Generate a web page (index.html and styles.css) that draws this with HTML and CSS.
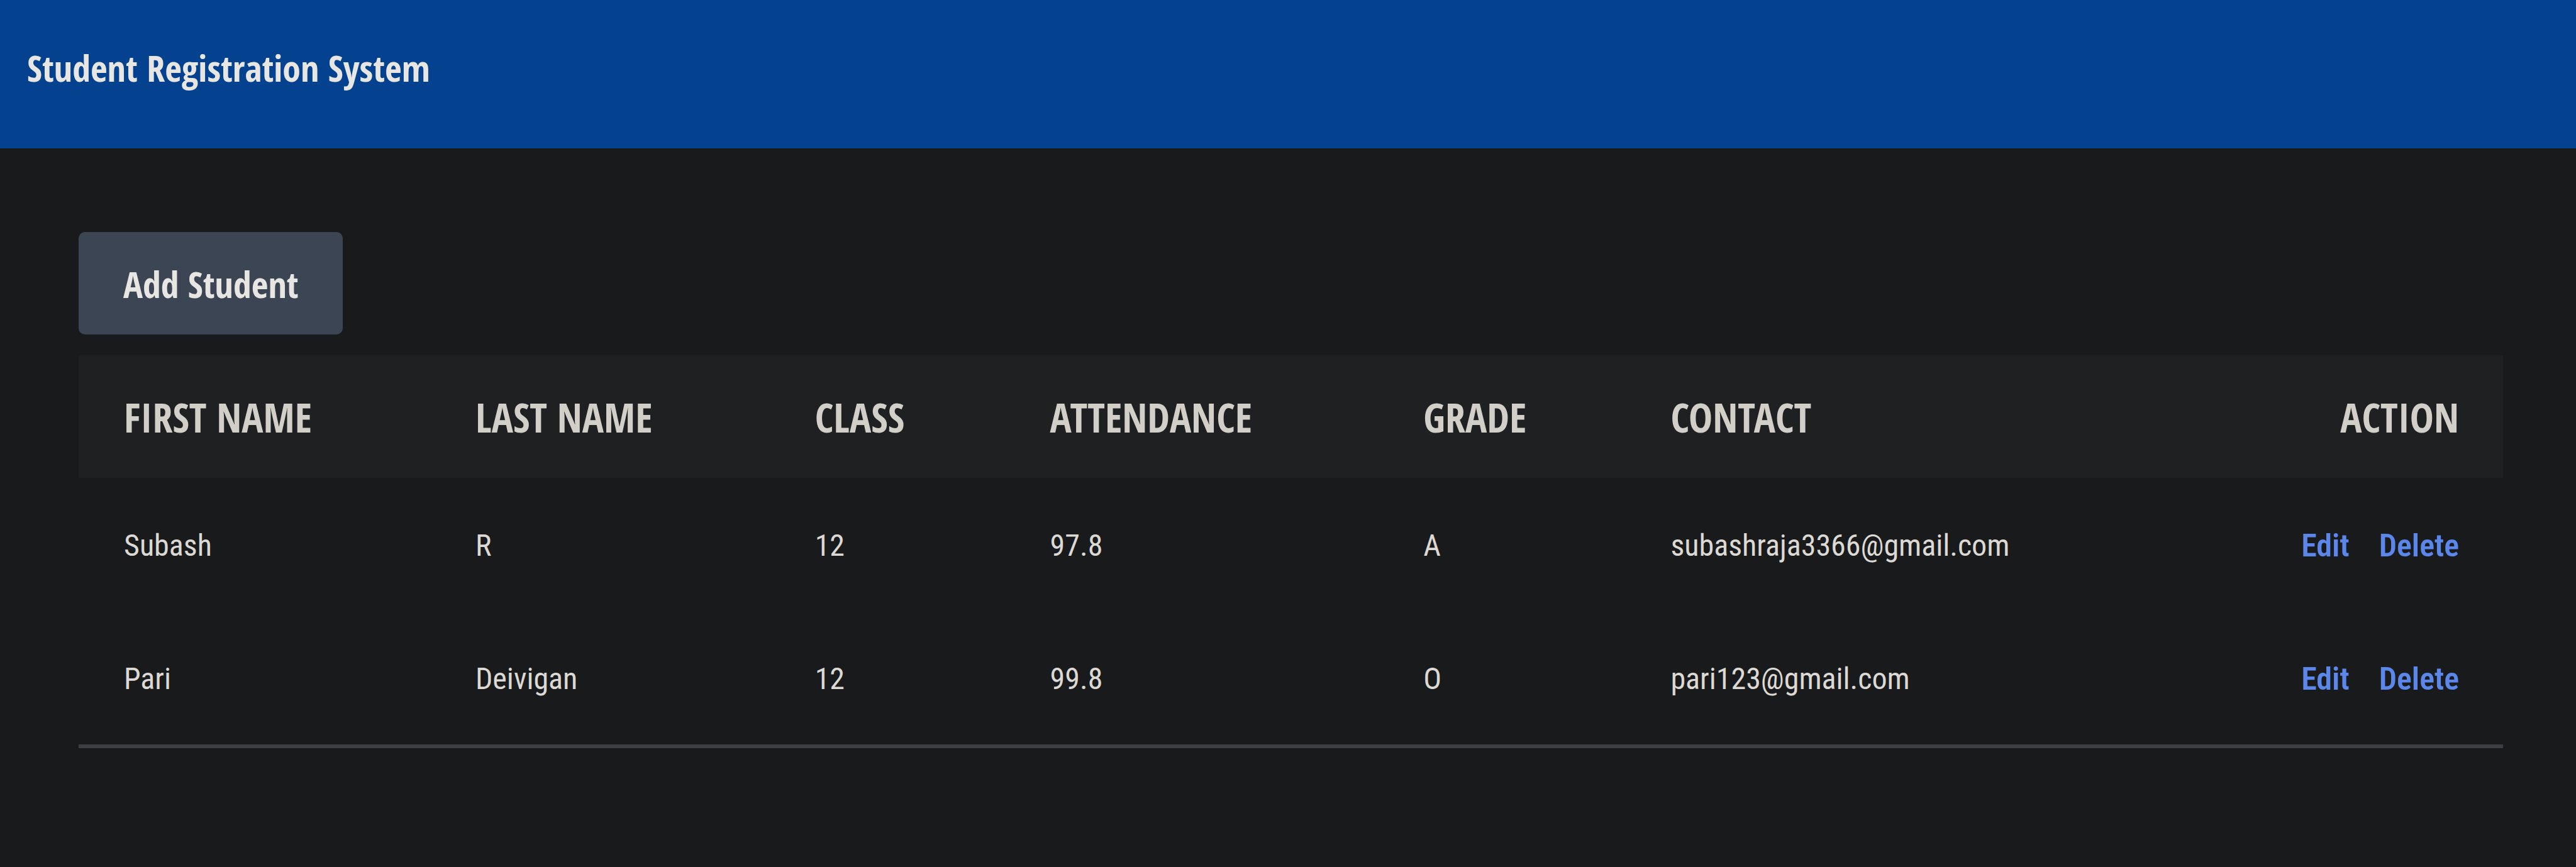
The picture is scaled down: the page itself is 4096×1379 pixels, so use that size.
FILE: index.html
```html
<!DOCTYPE html>
<html lang="en">
<head>
  <meta charset="utf-8">
  <meta name="viewport" content="width=device-width, initial-scale=1">
  <title>Student Registration System</title>
  <link rel="stylesheet" href="styles.css">
</head>
<body>
  <header class="topbar">
    <h1 class="topbar-title">Student Registration System</h1>
  </header>
  <main class="content">
    <button type="button" class="add-button">Add Student</button>
    <table class="students">
      <colgroup>
        <col class="col-first">
        <col class="col-last">
        <col class="col-class">
        <col class="col-attendance">
        <col class="col-grade">
        <col class="col-contact">
        <col class="col-action">
      </colgroup>
      <thead>
        <tr>
          <th scope="col">FIRST NAME</th>
          <th scope="col">LAST NAME</th>
          <th scope="col">CLASS</th>
          <th scope="col">ATTENDANCE</th>
          <th scope="col">GRADE</th>
          <th scope="col">CONTACT</th>
          <th scope="col" class="action">ACTION</th>
        </tr>
      </thead>
      <tbody>
        <tr>
          <td>Subash</td>
          <td>R</td>
          <td>12</td>
          <td>97.8</td>
          <td>A</td>
          <td>subashraja3366@gmail.com</td>
          <td class="action"><div class="links"><a href="#edit-1">Edit</a><a href="#delete-1">Delete</a></div></td>
        </tr>
        <tr>
          <td>Pari</td>
          <td>Deivigan</td>
          <td>12</td>
          <td>99.8</td>
          <td>O</td>
          <td>pari123@gmail.com</td>
          <td class="action"><div class="links"><a href="#edit-2">Edit</a><a href="#delete-2">Delete</a></div></td>
        </tr>
      </tbody>
    </table>
  </main>
</body>
</html>
```
FILE: styles.css
```css
* {
  box-sizing: border-box;
}

body {
  margin: 0;
  background: #191a1c;
  color: #dcd9d4;
  font-family: "Roboto Condensed", "Open Sans", sans-serif;
  font-size: 48px;
  line-height: 80px;
}

.topbar {
  padding: 68px 43px 88px;
  background: #04418f;
}

.topbar-title {
  margin: 0;
  color: #e8e6e3;
  font-family: "Open Sans Condensed", "Open Sans", sans-serif;
  font-size: 58px;
  font-weight: 700;
  line-height: 80px;
}

.content {
  display: flex;
  flex-direction: column;
  align-items: flex-start;
  gap: 33px;
  padding: 133px 116px 132px 125px;
}

.add-button {
  padding: 43px 70px 40px 71px;
  border: 0;
  border-radius: 10px;
  background: #3b4554;
  color: #e8e6e3;
  font-family: "Open Sans Condensed", "Open Sans", sans-serif;
  font-size: 58px;
  font-weight: 700;
  line-height: 80px;
}

.students {
  width: 100%;
  table-layout: fixed;
  border-collapse: separate;
  border-spacing: 0;
  border-bottom: 6px solid #3c3e41;
}

.col-first {
  width: 14.5%;
}

.col-last {
  width: 14%;
}

.col-class {
  width: 9.7%;
}

.col-attendance {
  width: 15.4%;
}

.col-grade {
  width: 10.2%;
}

.col-contact {
  width: 22%;
}

.students th,
.students td {
  padding: 68px 70px 64px 72px;
  text-align: left;
  white-space: nowrap;
}

.students th {
  padding: 59px 70px 56px 72px;
  background: #1e2022;
  color: #d2cec8;
  font-family: "Open Sans Condensed", "Open Sans", sans-serif;
  font-size: 64px;
  font-weight: 700;
}

.students .action {
  text-align: right;
}

.links {
  display: flex;
  justify-content: flex-end;
  gap: 47px;
}

.links a {
  color: #5b86ea;
  font-size: 50px;
  font-weight: 600;
  text-decoration: none;
}
```
